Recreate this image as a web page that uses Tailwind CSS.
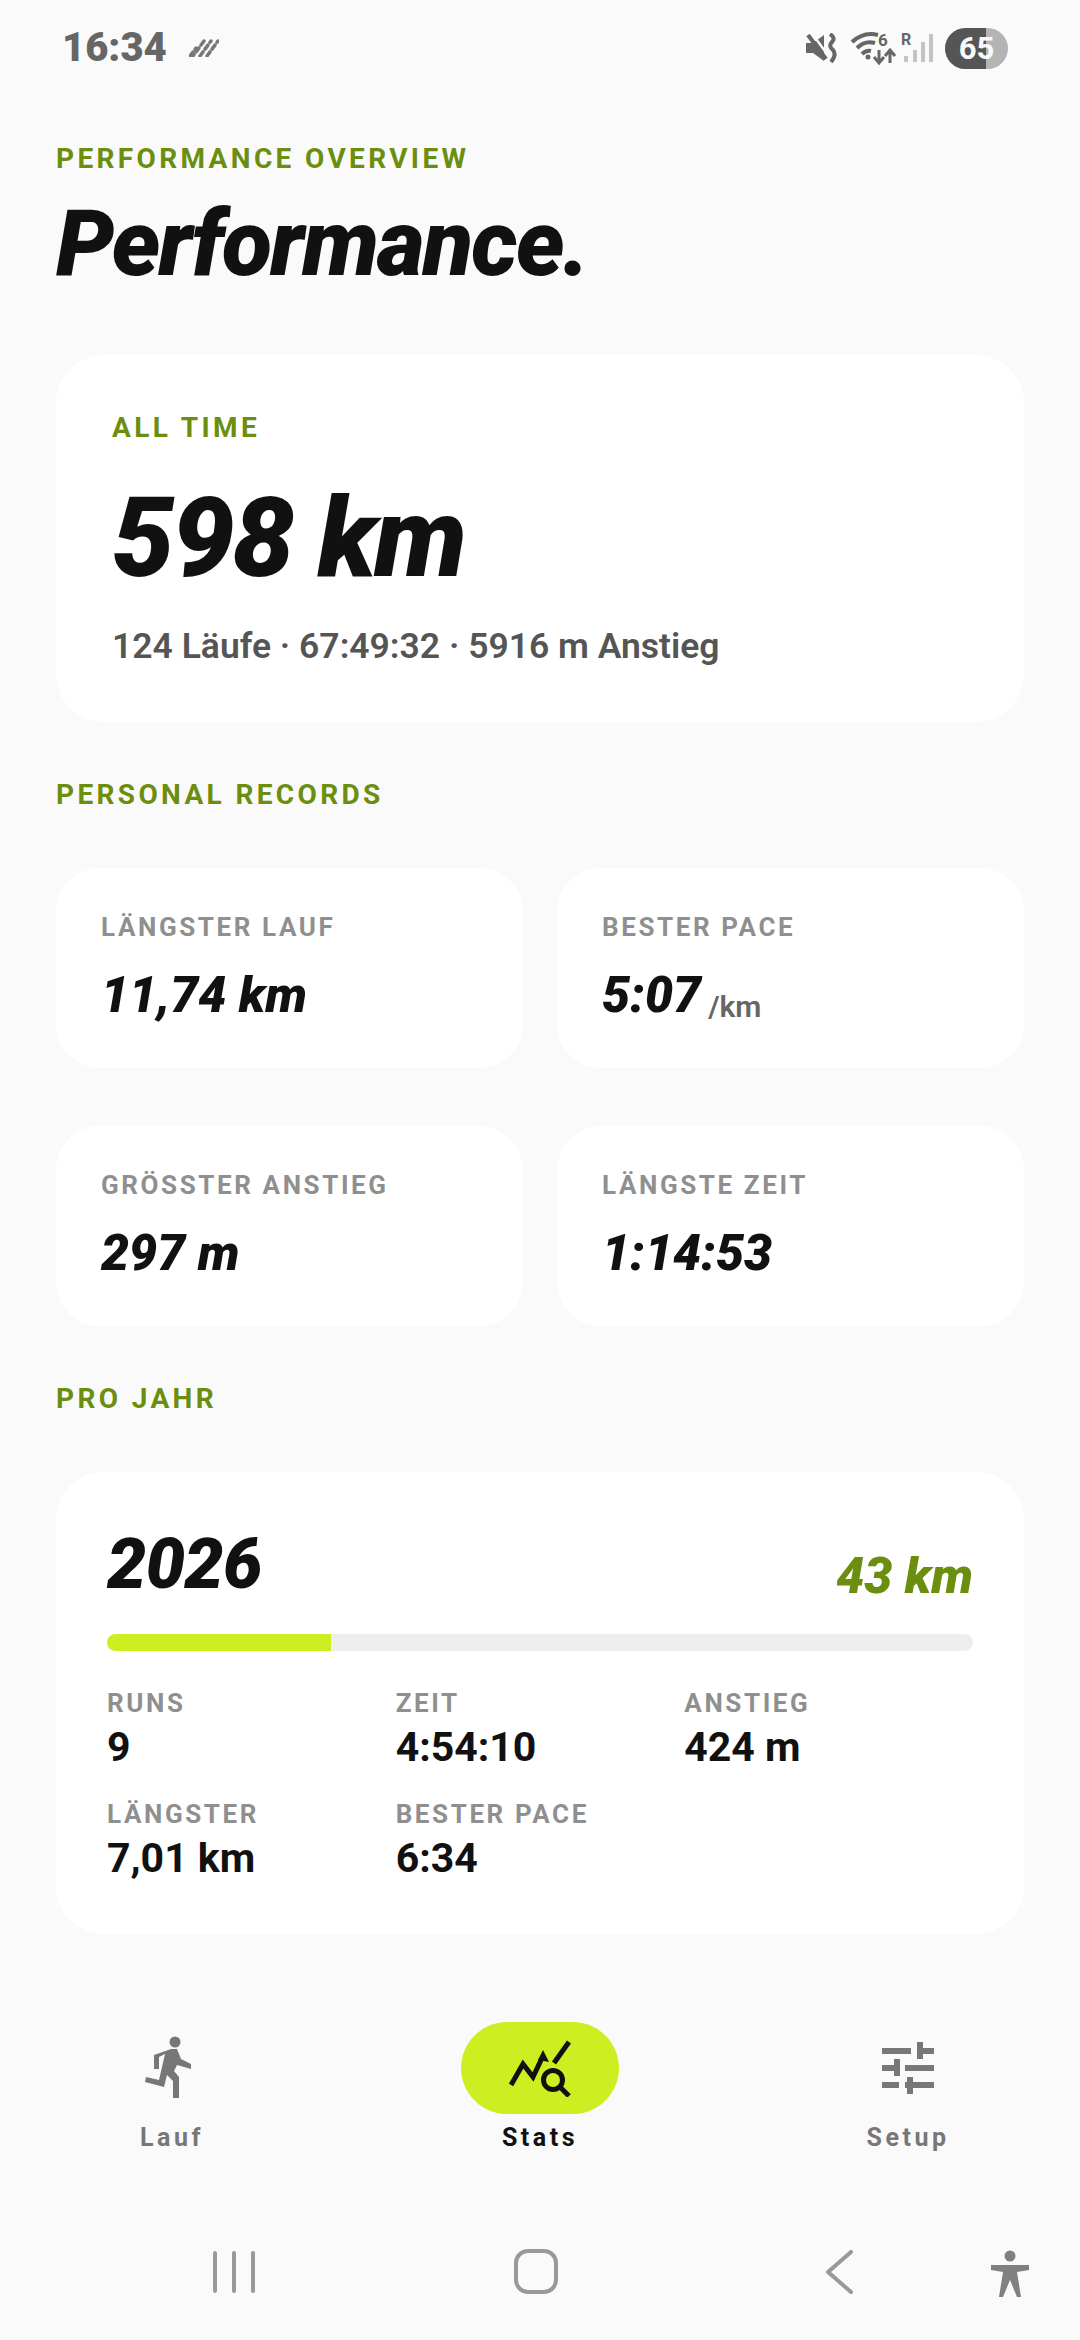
<!DOCTYPE html>
<html lang="de">
<head>
<meta charset="UTF-8" />
<meta name="viewport" content="width=device-width, initial-scale=1.0" />
<title>Performance</title>
<script src="https://cdn.jsdelivr.net/npm/@tailwindcss/browser@4"></script>
</head>
<body class="bg-[#fafafa] font-['Roboto',sans-serif] text-[#111111]">
<div class="w-[1080px] h-[2340px] overflow-hidden flex flex-col">

  <!-- status bar -->
  <div class="h-[96px] pl-[62px] pr-[72px] flex items-center justify-between shrink-0">
    <div class="flex items-center gap-[22px]">
      <span class="text-[40px] leading-none font-black text-[#666666]">16:34</span>
      <svg width="30" height="18" viewBox="0 0 30 18" stroke="#777777" stroke-width="3.500" stroke-linecap="round" stroke-dasharray="5 3.500">
        <path d="M1 17 L7 9" /><path d="M4 2 L15 17" transform="matrix(-1 0 0 1 19 0)" /><path d="M11 17 L22 2" /><path d="M18 17 L29 2" />
      </svg>
    </div>
    <div class="flex items-center">
      <!-- muted -->
      <svg width="31" height="30" viewBox="0 0 31 30" class="mr-[14px]">
        <path d="M0 10 h7 L18 2 V28 L7 20 H0 Z" fill="#666666" />
        <path d="M2 0 L21 26" stroke="#fafafa" stroke-width="2.500" transform="translate(3 -1)" />
        <path d="M2 2 L20 26" stroke="#666666" stroke-width="4" />
        <path d="M24 1 Q30 5 26 9 Q22 13 27 17 Q31 22 25 29" stroke="#666666" stroke-width="4" fill="none" />
      </svg>
      <!-- wifi -->
      <svg width="44" height="32" viewBox="0 0 44 32" class="mr-[6px] overflow-visible">
        <path d="M1 10 Q13 -1 27 3 M6 16 Q14 8 24 11 M11 22 Q15 18 20 19" stroke="#666666" stroke-width="4" fill="none" />
        <circle cx="17" cy="25" r="2.500" fill="#666666" />
        <text x="27" y="14" font-size="17" font-weight="700" fill="#666666" font-family="Roboto">6</text>
        <path d="M28 18 V30 M23 25 L28 31 L33 25 M39 31 V19 M34 24 L39 18 L44 24" stroke="#666666" stroke-width="3" fill="none" />
      </svg>
      <!-- signal -->
      <svg width="32" height="30" viewBox="0 0 32 30" class="mr-[12px] overflow-visible">
        <text x="0" y="12" font-size="16" font-weight="700" fill="#666666" font-family="Roboto">R</text>
        <rect x="3" y="23" width="4" height="6" fill="#c4c4c4" />
        <rect x="12" y="17" width="4" height="12" fill="#c4c4c4" />
        <rect x="20" y="9" width="4" height="20" fill="#c4c4c4" />
        <rect x="28" y="1" width="4" height="28" fill="#c4c4c4" />
      </svg>
      <div class="relative w-[63px] h-[41px] rounded-full overflow-hidden bg-[#b4b4b4] flex items-center justify-center">
        <div class="absolute left-0 top-0 bottom-0 w-[41px] bg-[#555555]"></div>
        <span class="relative text-[#fafafa] text-[31px] leading-none font-bold">65</span>
      </div>
    </div>
  </div>

  <!-- page content -->
  <div class="px-[56px] flex flex-col">
    <div class="mt-[46px] text-[28px] leading-[34px] font-bold tracking-[0.12em] text-[#6b8e0e]">PERFORMANCE OVERVIEW</div>
    <h1 class="mt-[13px] text-[92px] leading-[110px] font-black italic tracking-[-0.02em]">Performance.</h1>

    <div class="mt-[56px] h-[367px] bg-white rounded-[48px] px-[56px] pt-[56px]">
      <div class="text-[28px] leading-[34px] font-bold tracking-[0.12em] text-[#6b8e0e]">ALL TIME</div>
      <div class="mt-[28px] text-[111px] leading-[130px] font-black italic tracking-[-0.02em]">598 km</div>
      <div class="mt-[21px] text-[35.500px] leading-[44px] font-semibold text-[#555555]">124 Läufe · 67:49:32 · 5916 m Anstieg</div>
    </div>

    <div class="mt-[56px] text-[28px] leading-[34px] font-bold tracking-[0.12em] text-[#6b8e0e]">PERSONAL RECORDS</div>

    <div class="mt-[56px] grid grid-cols-2 gap-x-[34px] gap-y-[58px]">
      <div class="h-[200px] bg-white rounded-[44px] px-[45px] pt-[44px]">
        <div class="text-[26px] leading-[30px] font-bold tracking-[0.1em] text-[#8f8f8f]">LÄNGSTER LAUF</div>
        <div class="mt-[23px] text-[50px] leading-[60px] font-black italic">11,74 km</div>
      </div>
      <div class="h-[200px] bg-white rounded-[44px] px-[45px] pt-[44px]">
        <div class="text-[26px] leading-[30px] font-bold tracking-[0.1em] text-[#8f8f8f]">BESTER PACE</div>
        <div class="mt-[23px] text-[50px] leading-[60px] font-black italic">5:07<span class="inline-block translate-y-[5px] ml-[7px] text-[30px] font-semibold not-italic text-[#666666]">/km</span></div>
      </div>
      <div class="h-[200px] bg-white rounded-[44px] px-[45px] pt-[44px]">
        <div class="text-[26px] leading-[30px] font-bold tracking-[0.1em] text-[#8f8f8f]">GRÖSSTER ANSTIEG</div>
        <div class="mt-[23px] text-[50px] leading-[60px] font-black italic">297 m</div>
      </div>
      <div class="h-[200px] bg-white rounded-[44px] px-[45px] pt-[44px]">
        <div class="text-[26px] leading-[30px] font-bold tracking-[0.1em] text-[#8f8f8f]">LÄNGSTE ZEIT</div>
        <div class="mt-[23px] text-[50px] leading-[60px] font-black italic">1:14:53</div>
      </div>
    </div>

    <div class="mt-[56px] text-[28px] leading-[34px] font-bold tracking-[0.12em] text-[#6b8e0e]">PRO JAHR</div>

    <div class="mt-[56px] h-[462px] bg-white rounded-[48px] px-[51px] pt-[50px]">
      <div class="flex items-end justify-between h-[84px]">
        <span class="text-[70px] leading-[84px] font-black italic tracking-[-0.01em]">2026</span>
        <span class="text-[50px] leading-[60px] font-black italic text-[#6b8e0e]">43 km</span>
      </div>
      <div class="mt-[28px] h-[17px] rounded-full bg-[#eeeeee] overflow-hidden">
        <div class="h-full w-[224px] bg-[#cdee20]"></div>
      </div>
      <div class="mt-[37px] grid grid-cols-3 gap-y-[27px]">
        <div>
          <div class="text-[26px] leading-[30px] font-bold tracking-[0.1em] text-[#8f8f8f]">RUNS</div>
          <div class="mt-[4px] text-[41px] leading-[50px] font-bold">9</div>
        </div>
        <div>
          <div class="text-[26px] leading-[30px] font-bold tracking-[0.1em] text-[#8f8f8f]">ZEIT</div>
          <div class="mt-[4px] text-[41px] leading-[50px] font-bold">4:54:10</div>
        </div>
        <div>
          <div class="text-[26px] leading-[30px] font-bold tracking-[0.1em] text-[#8f8f8f]">ANSTIEG</div>
          <div class="mt-[4px] text-[41px] leading-[50px] font-bold">424 m</div>
        </div>
        <div>
          <div class="text-[26px] leading-[30px] font-bold tracking-[0.1em] text-[#8f8f8f]">LÄNGSTER</div>
          <div class="mt-[4px] text-[41px] leading-[50px] font-bold">7,01 km</div>
        </div>
        <div>
          <div class="text-[26px] leading-[30px] font-bold tracking-[0.1em] text-[#8f8f8f]">BESTER PACE</div>
          <div class="mt-[4px] text-[41px] leading-[50px] font-bold">6:34</div>
        </div>
      </div>
    </div>
  </div>

  <!-- bottom nav -->
  <div class="mt-[88px] h-[136px] flex justify-between pl-[72px] pr-[72px] shrink-0">
    <div class="w-[200px] flex flex-col items-center">
      <div class="h-[92px] flex items-center justify-center">
        <svg class="-ml-[6px]" width="48" height="64" viewBox="0 0 48 64" fill="#777777">
          <circle cx="30" cy="6" r="5.500" />
          <path d="M9 19 L26 13 H32 L36 23 L46 28 V33 L32 29 L29 35 L34 41 V62 H28 V45 L22 39 L19 51 L0 46 L1 41 L14 44 L20 18 L14 21 V33 H9 Z" />
        </svg>
      </div>
      <span class="mt-[9px] text-[25px] leading-[30px] font-bold tracking-[0.14em] text-[#777777]">Lauf</span>
    </div>
    <div class="w-[200px] flex flex-col items-center">
      <div class="w-[158px] h-[92px] rounded-full bg-[#cdee20] flex items-center justify-center">
        <svg width="62" height="58" viewBox="0 0 62 58" fill="none" stroke="#111111" stroke-width="5">
          <path d="M2 46 L14 25 L24 38 L33 19" />
          <path d="M29 21 L34 11 L40 23 Z" fill="#111111" stroke="none" />
          <path d="M45 24 L60 3" />
          <circle cx="44" cy="41" r="9.500" />
          <path d="M51 48 L60 57" />
        </svg>
      </div>
      <span class="mt-[9px] text-[25px] leading-[30px] font-bold tracking-[0.14em] text-[#111111]">Stats</span>
    </div>
    <div class="w-[200px] flex flex-col items-center">
      <div class="h-[92px] flex items-center justify-center">
        <svg width="52" height="52" viewBox="0 0 52 52" fill="#777777">
          <rect x="0" y="6" width="29" height="6" />
          <rect x="35" y="0" width="6" height="17" />
          <rect x="41" y="6" width="11" height="6" />
          <rect x="0" y="23" width="12" height="6" />
          <rect x="12" y="17" width="6" height="17" />
          <rect x="23" y="23" width="29" height="6" />
          <rect x="0" y="40" width="17" height="6" />
          <rect x="23" y="40" width="29" height="6" />
          <rect x="25" y="35" width="6" height="17" />
        </svg>
      </div>
      <span class="mt-[9px] text-[25px] leading-[30px] font-bold tracking-[0.14em] text-[#777777]">Setup</span>
    </div>
  </div>

  <!-- android nav -->
  <div class="mt-[91px] pl-[213px] flex items-start shrink-0">
    <div class="mt-[2px] flex gap-[15px]">
      <div class="w-[4px] h-[42px] bg-[#999999] rounded-full"></div>
      <div class="w-[4px] h-[42px] bg-[#999999] rounded-full"></div>
      <div class="w-[4px] h-[42px] bg-[#999999] rounded-full"></div>
    </div>
    <div class="ml-[259px] w-[44px] h-[45px] border-[4px] border-[#999999] rounded-[14px]"></div>
    <svg class="ml-[267px] mt-[1px]" width="28" height="44" viewBox="0 0 28 44" fill="none" stroke="#999999" stroke-width="4" stroke-linecap="round" stroke-linejoin="round">
      <path d="M26 2 L3 22 L26 42" />
    </svg>
    <svg class="ml-[137px] mt-[1px]" width="40" height="48" viewBox="0 0 40 48" fill="#808080">
      <circle cx="20" cy="6" r="5.500" />
      <path d="M1 15 H39 V20 L27 22 L31 47 H27 L20 30 L13 47 H9 L13 22 L1 20 Z" />
    </svg>
  </div>
</div>
</body>
</html>
